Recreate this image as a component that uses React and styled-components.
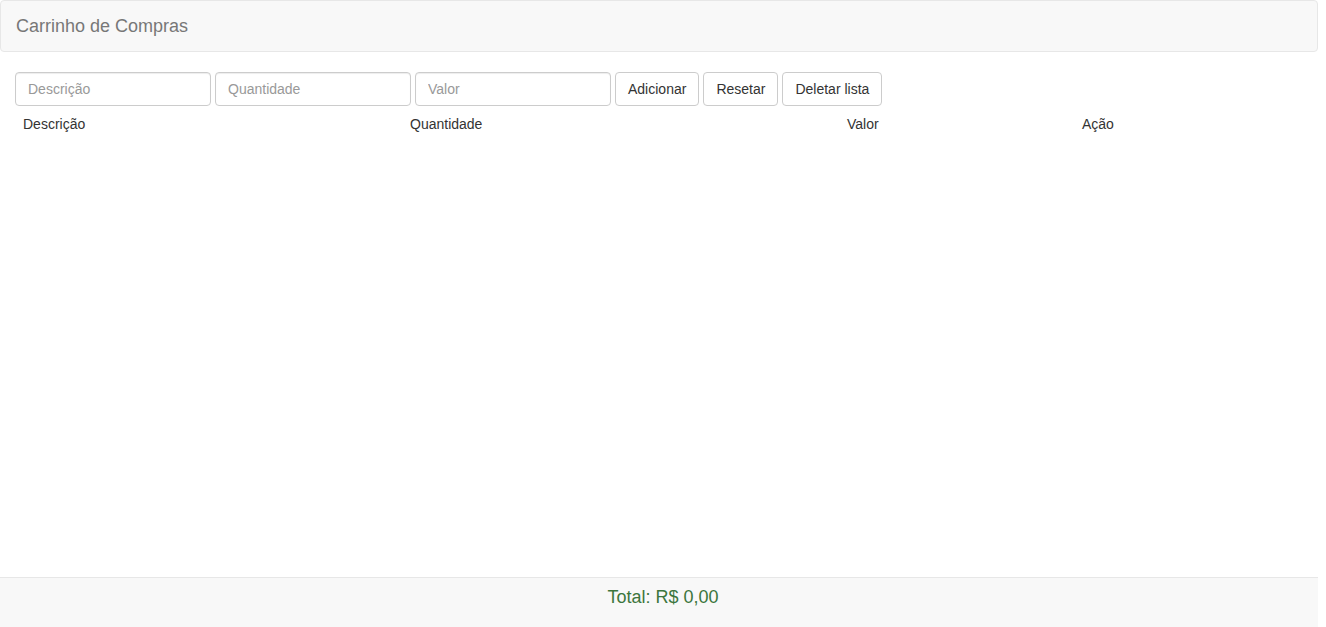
import React, { useState } from 'react'
import styled, { createGlobalStyle } from 'styled-components'

const GlobalStyle = createGlobalStyle`
  html, body {
    margin: 0;
    padding: 0;
    background: #fff;
  }
  body {
    font-family: "Liberation Sans", Arial, Helvetica, sans-serif;
    font-size: 14px;
    line-height: 1.42857;
    color: #333;
  }
  * {
    box-sizing: border-box;
  }
`

const Page = styled.div`
  width: 1318px;
  min-height: 627px;
  display: flex;
  flex-direction: column;
`

const Navbar = styled.header`
  height: 52px;
  background: #f8f8f8;
  border: 1px solid #e7e7e7;
  border-radius: 4px;
  margin-bottom: 20px;
  display: flex;
  align-items: center;
`

const Brand = styled.span`
  padding: 0 15px;
  font-size: 18px;
  line-height: 20px;
  color: #777;
`

const Main = styled.main`
  flex: 1;
  padding: 0 15px;
`

const Form = styled.form`
  display: flex;
  gap: 4px;
`

const Input = styled.input`
  width: 196px;
  height: 34px;
  padding: 6px 12px;
  font-family: inherit;
  font-size: 14px;
  color: #555;
  background: #fff;
  border: 1px solid #ccc;
  border-radius: 4px;
  box-shadow: inset 0 1px 1px rgba(0, 0, 0, 0.075);
  outline: none;

  &::placeholder {
    color: #999;
  }
`

const Button = styled.button`
  height: 34px;
  padding: 6px 12px;
  font-family: inherit;
  font-size: 14px;
  line-height: 20px;
  color: #333;
  background: #fff;
  border: 1px solid #ccc;
  border-radius: 4px;
  cursor: pointer;
`

const Table = styled.table`
  width: 100%;
  border-collapse: collapse;
  table-layout: fixed;
`

const Th = styled.th`
  width: ${(p) => p.$w}px;
  padding: 8px;
  font-weight: normal;
  text-align: left;
  line-height: 20px;
`

const Footer = styled.footer`
  height: 50px;
  background: #f8f8f8;
  border-top: 1px solid #e7e7e7;
  display: flex;
  justify-content: center;
  padding: 9px 0 0 8px;
`

const Total = styled.span`
  font-size: 18px;
  line-height: 20px;
  color: #3c763d;
`

const columns = [
  { label: 'Descrição', w: 387 },
  { label: 'Quantidade', w: 437 },
  { label: 'Valor', w: 235 },
  { label: 'Ação', w: 229 },
]

const App = () => {
  const [items, setItems] = useState([])
  const [desc, setDesc] = useState('')
  const [qtd, setQtd] = useState('')
  const [valor, setValor] = useState('')

  const total = items.reduce((acc, i) => acc + i.qtd * i.valor, 0)

  const add = (e) => {
    e.preventDefault()
    if (!desc) return
    setItems([...items, { desc, qtd: Number(qtd) || 0, valor: Number(valor) || 0 }])
    setDesc('')
    setQtd('')
    setValor('')
  }

  const reset = () => {
    setDesc('')
    setQtd('')
    setValor('')
  }

  return (
    <Page>
      <GlobalStyle />
      <Navbar>
        <Brand>Carrinho de Compras</Brand>
      </Navbar>
      <Main>
        <Form onSubmit={add}>
          <Input placeholder="Descrição" value={desc} onChange={(e) => setDesc(e.target.value)} />
          <Input placeholder="Quantidade" value={qtd} onChange={(e) => setQtd(e.target.value)} />
          <Input placeholder="Valor" value={valor} onChange={(e) => setValor(e.target.value)} />
          <Button type="submit">Adicionar</Button>
          <Button type="button" onClick={reset}>Resetar</Button>
          <Button type="button" onClick={() => setItems([])}>Deletar lista</Button>
        </Form>
        <Table>
          <thead>
            <tr>
              {columns.map((c) => (
                <Th key={c.label} $w={c.w}>{c.label}</Th>
              ))}
            </tr>
          </thead>
          <tbody>
            {items.map((i, idx) => (
              <tr key={idx}>
                <td>{i.desc}</td>
                <td>{i.qtd}</td>
                <td>{i.valor}</td>
                <td />
              </tr>
            ))}
          </tbody>
        </Table>
      </Main>
      <Footer>
        <Total>Total: R$ {total.toFixed(2).replace('.', ',')}</Total>
      </Footer>
    </Page>
  )
}

export default App
